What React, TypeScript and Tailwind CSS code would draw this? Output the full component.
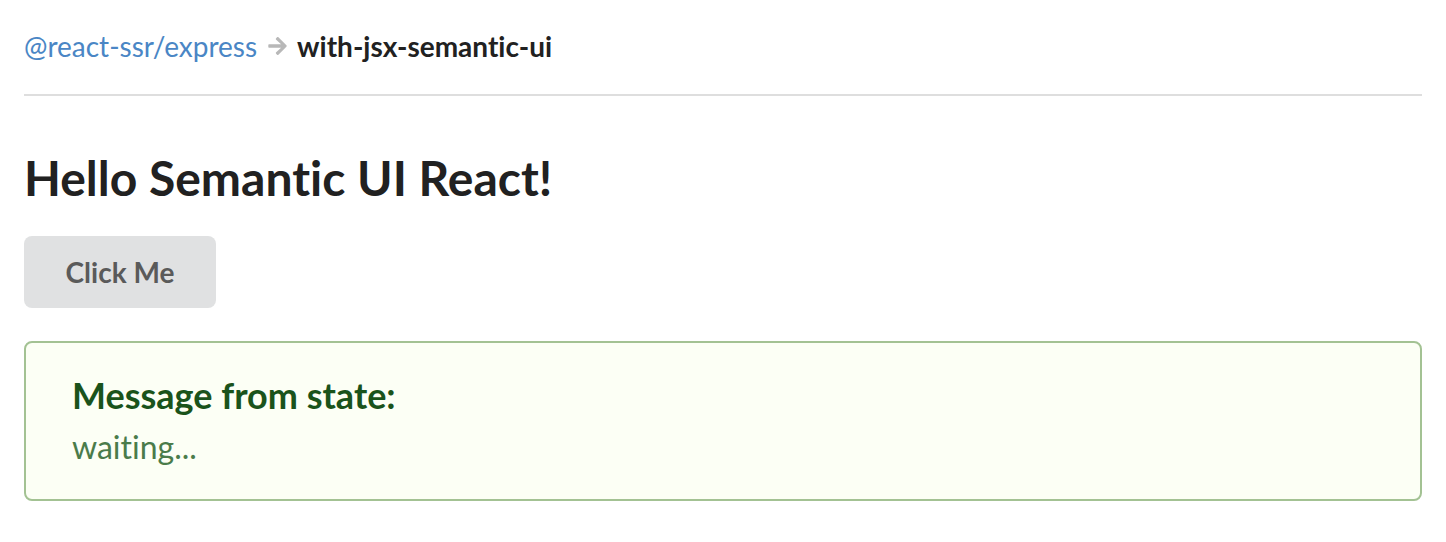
export default function App() {
  return (
    <div className="min-h-[542px] bg-white px-[24px] pt-[26px] font-['Lato','Liberation_Sans',sans-serif] text-[#212121] [font-variant-ligatures:no-common-ligatures]">
      <div className="flex h-[40px] items-center text-[28px] leading-[40px]">
        <a className="text-[#4a86c5]" href="#">
          @react-ssr/express
        </a>
        {/* arrow divider */}
        <svg
          viewBox="0 37 448 438"
          className="ml-[11px] mr-[10px] h-[18px] w-[19px] fill-[#b8b8b8]"
        >
          <path d="M190.5 66.9l22.2-22.2c9.4-9.4 24.6-9.4 33.9 0L441 239c9.4 9.4 9.4 24.6 0 33.9L246.6 467.3c-9.4 9.4-24.6 9.4-33.9 0l-22.2-22.2c-9.5-9.5-9.3-25 .4-34.3L311.4 296H24c-13.3 0-24-10.7-24-24v-32c0-13.3 10.7-24 24-24h287.4L190.9 101.2c-9.8-9.3-10-24.8-.4-34.3z" />
        </svg>
        <span className="font-bold">with-jsx-semantic-ui</span>
      </div>

      <div className="mt-[28px] h-[2px] bg-[#dedede]" />

      <h1 className="mt-[46px] h-[72px] text-[48px] font-bold leading-[72px]">
        Hello Semantic UI React!
      </h1>

      <button className="mt-[22px] h-[72px] w-[192px] rounded-[8px] bg-[#e0e1e2] text-[28px] font-bold text-[#5a5a5a]">
        Click Me
      </button>

      <div className="mt-[33px] rounded-[8px] border-2 border-[#a3c293] bg-[#fcfff5] px-[46px] pb-[30px] pt-[30px]">
        <div className="text-[36px] font-bold leading-[44px] text-[#1a531b]">
          Message from state:
        </div>
        <p className="mt-[8px] text-[32px] leading-[44px] text-[#2c662d] opacity-85">
          waiting...
        </p>
      </div>
    </div>
  );
}
